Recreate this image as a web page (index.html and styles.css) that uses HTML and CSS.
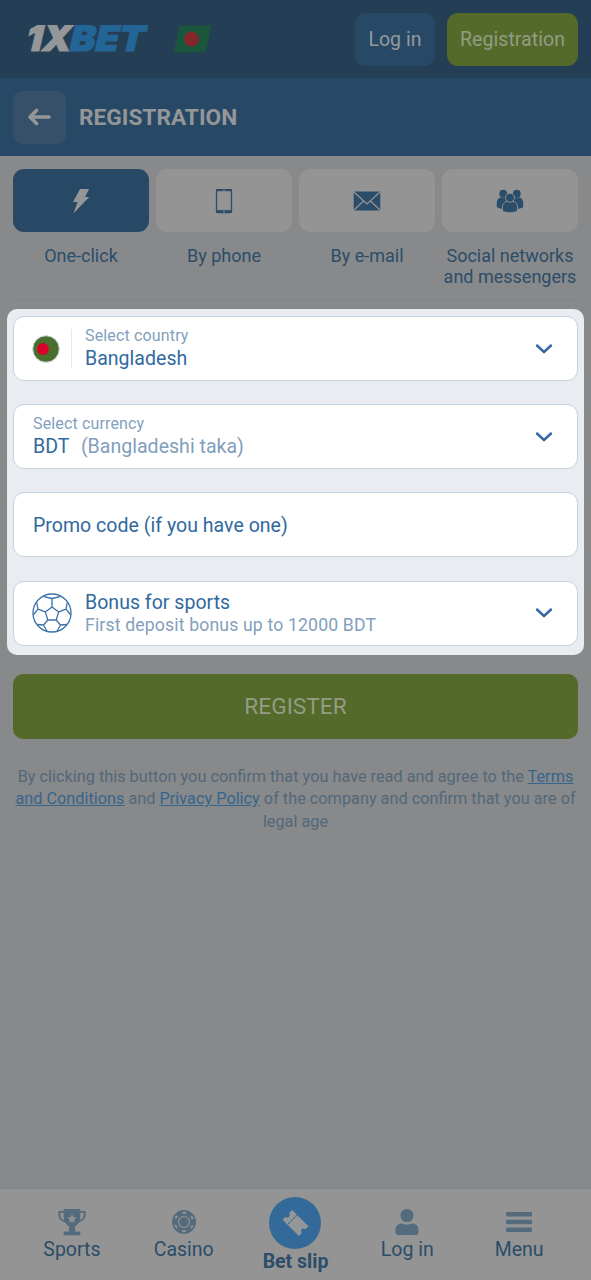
FILE: index.html
```html
<!DOCTYPE html>
<html lang="en">
<head>
<meta charset="utf-8">
<title>Registration</title>
<link rel="stylesheet" href="styles.css">
</head>
<body>
<div class="page">
  <header class="topbar">
    <svg class="logo" viewBox="0 0 124 30" width="124" height="30">
      <g transform="translate(0 28.500) skewX(-13)">
        <text class="logo-one" x="0" y="0" textLength="45" lengthAdjust="spacingAndGlyphs">1X</text>
        <text class="logo-bet" x="44" y="0" textLength="75" lengthAdjust="spacingAndGlyphs">BET</text>
      </g>
    </svg>
    <svg class="flag" viewBox="0 0 39 28" width="39" height="28"><path d="M7 .5H38.500L32.500 27.500H.5z" fill="#1a563b"/><circle cx="18.500" cy="14" r="7.500" fill="#84272a"/></svg>
    <button class="btn login">Log in</button>
    <button class="btn signup">Registration</button>
  </header>
  <div class="titlebar">
    <button class="back"><svg viewBox="0 0 24 18" width="24" height="18"><path d="M8.500 2.500 2 9l6.500 6.500M2.500 9H21" fill="none" stroke="#949698" stroke-width="3.600" stroke-linecap="round" stroke-linejoin="round"/></svg></button>
    <h1>REGISTRATION</h1>
  </div>
  <main>
    <nav class="methods">
      <div class="method"><div class="tile active"><svg viewBox="0 0 18 26" width="18" height="26"><path d="M8 1h9l-4 8h4.200L1.500 25.500 5.500 14H1z" fill="#949698"/></svg></div><span>One-click</span></div>
      <div class="method"><div class="tile"><svg viewBox="0 0 18 26" width="18" height="26"><rect x="1.500" y="1.600" width="15" height="23" rx="1.500" fill="none" stroke="#2b4d69" stroke-width="1.300"/><path d="M1 2.200h16" stroke="#2b4d69" stroke-width="2"/><path d="M1 23.500h16" stroke="#2b4d69" stroke-width="2.700"/><circle cx="9" cy="23.600" r=".8" fill="#949494"/><path d="M7 2.300h4" stroke="#949494" stroke-width=".6"/></svg></div><span>By phone</span></div>
      <div class="method"><div class="tile"><svg viewBox="0 0 28 20" width="28" height="20"><rect x=".7" y=".6" width="26.600" height="19" rx="1.200" fill="#2b4d69"/><path d="m1 1 13 12L27 1M1 19l9.500-9M27 19l-9.500-9" fill="none" stroke="#949494" stroke-width="1.200"/></svg></div><span>By e-mail</span></div>
      <div class="method"><div class="tile"><svg viewBox="0 0 28 24" width="28" height="24"><g fill="#2b4d69"><circle cx="7.200" cy="4.700" r="3.900"/><circle cx="20.800" cy="4.700" r="3.900"/><path d="M.8 18v-4c0-3.500 2-5.500 5-5.500H11L9 20C5.500 20 2.500 19.500.8 18zM27.200 18v-4c0-3.500-2-5.500-5-5.500H17L19 20c3.500 0 6.500-.5 8.200-2z"/></g><g fill="#2b4d69" stroke="#949494" stroke-width=".9"><path d="M6.500 22V18c0-3.800 2.700-5.700 6-5.700h3c3.300 0 6 1.900 6 5.700v4c-4 2.300-11 2.300-15 0z"/><circle cx="14" cy="8.700" r="4.500"/></g></svg></div><span>Social networks<br>and messengers</span></div>
    </nav>
    <form class="highlight">
      <div class="field">
        <svg class="country" viewBox="0 0 28 28" width="28" height="28"><circle cx="14" cy="14" r="13.300" fill="#496e2d" stroke="#d2dce3" stroke-width="1"/><circle cx="11" cy="14" r="5.900" fill="#d80027"/></svg>
        <i class="rule"></i>
        <div class="copy"><small>Select country</small><b>Bangladesh</b></div>
        <svg class="chevron" viewBox="0 0 18 12" width="18" height="12"><path d="m2 2.500 7 6.500 7-6.500" fill="none" stroke="#3069a0" stroke-width="2.400" stroke-linecap="round"/></svg>
      </div>
      <div class="field wide">
        <div class="copy"><small>Select currency</small><b>BDT <em>(Bangladeshi taka)</em></b></div>
        <svg class="chevron" viewBox="0 0 18 12" width="18" height="12"><path d="m2 2.500 7 6.500 7-6.500" fill="none" stroke="#3069a0" stroke-width="2.400" stroke-linecap="round"/></svg>
      </div>
      <div class="field wide promo"><b>Promo code (if you have one)</b></div>
      <div class="field">
        <svg class="ball" viewBox="0 0 40 40" width="40" height="40"><g fill="none" stroke="#3b72a6" stroke-width="1.300" stroke-linejoin="round"><circle cx="20" cy="20" r="19"/><path d="m20 14 6.700 4.900L24.200 27h-8.400l-2.500-8.100zM20 14V5.500M26.700 18.900l7.300-2.700M24.200 27l4.300 5M15.800 27l-4.300 5M13.300 18.900 6 16.200M11 3.300 20 5.500l9-2.200M35.300 9.500 34 16.200l4.800 5.800M35 31.500l-6.500.5-3.500 6.300M5 31.500l6.500.5 3.500 6.300M4.700 9.500 6 16.200 1.200 22"/></g></svg>
        <div class="copy bonus"><b>Bonus for sports</b><small>First deposit bonus up to 12000 BDT</small></div>
        <svg class="chevron" viewBox="0 0 18 12" width="18" height="12"><path d="m2 2.500 7 6.500 7-6.500" fill="none" stroke="#3069a0" stroke-width="2.400" stroke-linecap="round"/></svg>
      </div>
    </form>
    <button class="register">REGISTER</button>
    <p class="legal">By clicking this button you confirm that you have read and agree to the <a>Terms<br>and Conditions</a> and <a>Privacy Policy</a> of the company and confirm that you are of<br>legal age</p>
  </main>
  <footer class="tabs">
    <div class="tab"><svg viewBox="0 0 28 28" width="28" height="28"><path d="M5.700 1h16.600v2H27.500v4c0 4-2.700 6.300-6.500 7.200-1 2-2.400 3.200-4 4V23.500H22.300V27.300H5.700V23.500H11V18.200c-1.600-.8-3-2-4-4C3.200 13.300.5 11 .5 7V3h5.200zM5.700 4.700H2.300V7c0 2.600 1.500 4.300 3.900 5.200-.4-2-.5-4.500-.5-7.500zm16.600 0c0 3-.1 5.500-.5 7.500 2.400-.9 3.900-2.600 3.900-5.200V4.700z" fill="#536b7c"/><path d="m14 6.300 1.300 3 3.200.3-2.400 2.100.7 3.200-2.800-1.700-2.800 1.700.7-3.200-2.400-2.100 3.200-.3z" fill="#949494"/></svg><span>Sports</span></div>
    <div class="tab"><svg viewBox="0 0 28 28" width="28" height="28"><circle cx="14" cy="14" r="11.900" fill="#536b7c"/><circle cx="14" cy="14" r="9.200" fill="none" stroke="#949494" stroke-width="2" stroke-dasharray="3.400 6.234" stroke-dashoffset="1.700" transform="rotate(30 14 14)"/><circle cx="14" cy="14" r="5.500" fill="none" stroke="#949494" stroke-width="1.200"/></svg><span>Casino</span></div>
    <div class="tab slip"><svg viewBox="0 0 52 52" width="52" height="52"><circle cx="26" cy="26" r="26" fill="#336a99"/><g transform="translate(26.500 26) rotate(45)"><path d="M-11.500-6.800H11.500v4.300a2.500 2.500 0 0 0 0 5V6.800H-11.500v-4.300a2.500 2.500 0 0 0 0-5z" fill="#949698"/><path d="M-4.500-6.800V6.800" stroke="#336a99" stroke-width="1.100" stroke-dasharray="2.400 1"/></g></svg><span>Bet slip</span></div>
    <div class="tab"><svg viewBox="0 0 28 28" width="28" height="28"><circle cx="14" cy="7.500" r="6.600" fill="#536b7c"/><path d="M2.500 24v-2c0-4 2.500-6.500 6.500-6.500 3 1.500 7 1.500 10 0 4 0 6.500 2.500 6.500 6.500v2c0 2-1 3-3 3h-17c-2 0-3-1-3-3z" fill="#536b7c"/></svg><span>Log in</span></div>
    <div class="tab"><svg viewBox="0 0 28 28" width="28" height="28"><g fill="#536b7c"><rect x="1" y="4" width="26" height="4.600" rx="1"/><rect x="1" y="11.700" width="26" height="4.600" rx="1"/><rect x="1" y="19.400" width="26" height="4.600" rx="1"/></g></svg><span>Menu</span></div>
  </footer>
</div>
</body>
</html>
```
FILE: styles.css
```css
* { box-sizing: border-box; }
body { margin: 0; font-family: Roboto, sans-serif; }
button { border: 0; padding: 0; font-family: inherit; }
svg { display: block; flex: none; }
.page { width: 591px; height: 1280px; background: #88898b; display: flex; flex-direction: column; overflow: hidden; }
.topbar { height: 78px; background: #243f55; display: flex; align-items: center; padding: 0 13px 0 24px; }
.logo { overflow: visible; margin-top: -4px; }
.logo text { font: 900 35px Inter, sans-serif; stroke-width: 1.200px; }
.logo-one { fill: #949698; stroke: #949698; }
.logo-bet { fill: #236596; stroke: #236596; }
.flag { margin-left: 25px; }
.btn { height: 53px; border-radius: 11px; font-size: 19.500px; letter-spacing: .05px; color: #93999e; }
.login { width: 80px; background: #284965; margin-left: auto; }
.signup { width: 131px; background: #536a2a; margin-left: 12px; color: #959b84; }
.titlebar { height: 78px; background: #284965; display: flex; align-items: center; padding: 0 13px; gap: 13px; }
.back { width: 53px; height: 53px; border-radius: 9px; background: #375069; display: grid; place-items: center; }
h1 { margin: 0; font-size: 22.700px; font-weight: 700; color: #949698; }
main { flex: 1; padding: 13px 0 0; }
.methods { display: grid; grid-template-columns: repeat(4, 136px); gap: 7px; margin: 0 13px; height: 132px; border-bottom: 1px solid #7e8387; }
.method { text-align: center; white-space: nowrap; font-size: 18px; line-height: 21px; color: #2b4d69; }
.tile { height: 63px; border-radius: 11px; background: #949494; display: grid; place-items: center; margin-bottom: 13px; }
.tile.active { background: #284965; }
.highlight { margin: 8px 7px 0; height: 346px; border-radius: 10px; background: #e9edf2; padding: 7px 6px; display: flex; flex-direction: column; gap: 23.200px; }
.field { height: 65px; flex: none; border: 1.500px solid #c4d4e2; border-radius: 11px; background: #fff; display: flex; align-items: center; padding: 0 24px 0 18px; }
.wide { padding-left: 19px; }
.country { margin-right: 11px; }
.rule { width: 1px; height: 39px; background: #e5eaf0; margin-right: 13px; }
.copy { display: flex; flex-direction: column; margin-top: -1px; }
.field small { font-size: 16px; line-height: 21px; letter-spacing: .15px; color: #83a0bd; }
.field b { font-size: 19.500px; line-height: 24px; font-weight: 400; letter-spacing: .03px; color: #3069a0; }
.copy:not(.bonus) b { padding-top: 1px; }
.field em { font-style: normal; color: #7f9ebc; margin-left: 7px; }
.promo b { padding-top: 3px; }
.ball { margin-right: 13px; }
.bonus { margin-top: 1px; }
.bonus small { font-size: 17.650px; }
.chevron { margin-left: auto; }
.register { display: block; width: 565px; height: 65px; margin: 19px 13px 0; padding-bottom: 1px; border-radius: 10px; background: #536a2a; color: #959b84; font-size: 22.700px; }
.legal { margin: 26.500px 0 0; text-align: center; white-space: nowrap; font-size: 16.300px; line-height: 22.800px; color: #52687a; }
.legal a { color: #35658d; text-decoration: underline; }
.tabs { height: 91px; background: #949494; box-shadow: 0 -1px 3px #76818b; display: grid; grid-template-columns: repeat(5, 1fr); padding: 0 16px; }
.tab { display: flex; flex-direction: column; align-items: center; padding-top: 19px; font-size: 19.500px; line-height: 24px; color: #2b4d69; }
.tab span { margin-top: 2px; }
.slip { padding-top: 8px; font-weight: 700; }
.slip span { margin-top: 1px; }
```
